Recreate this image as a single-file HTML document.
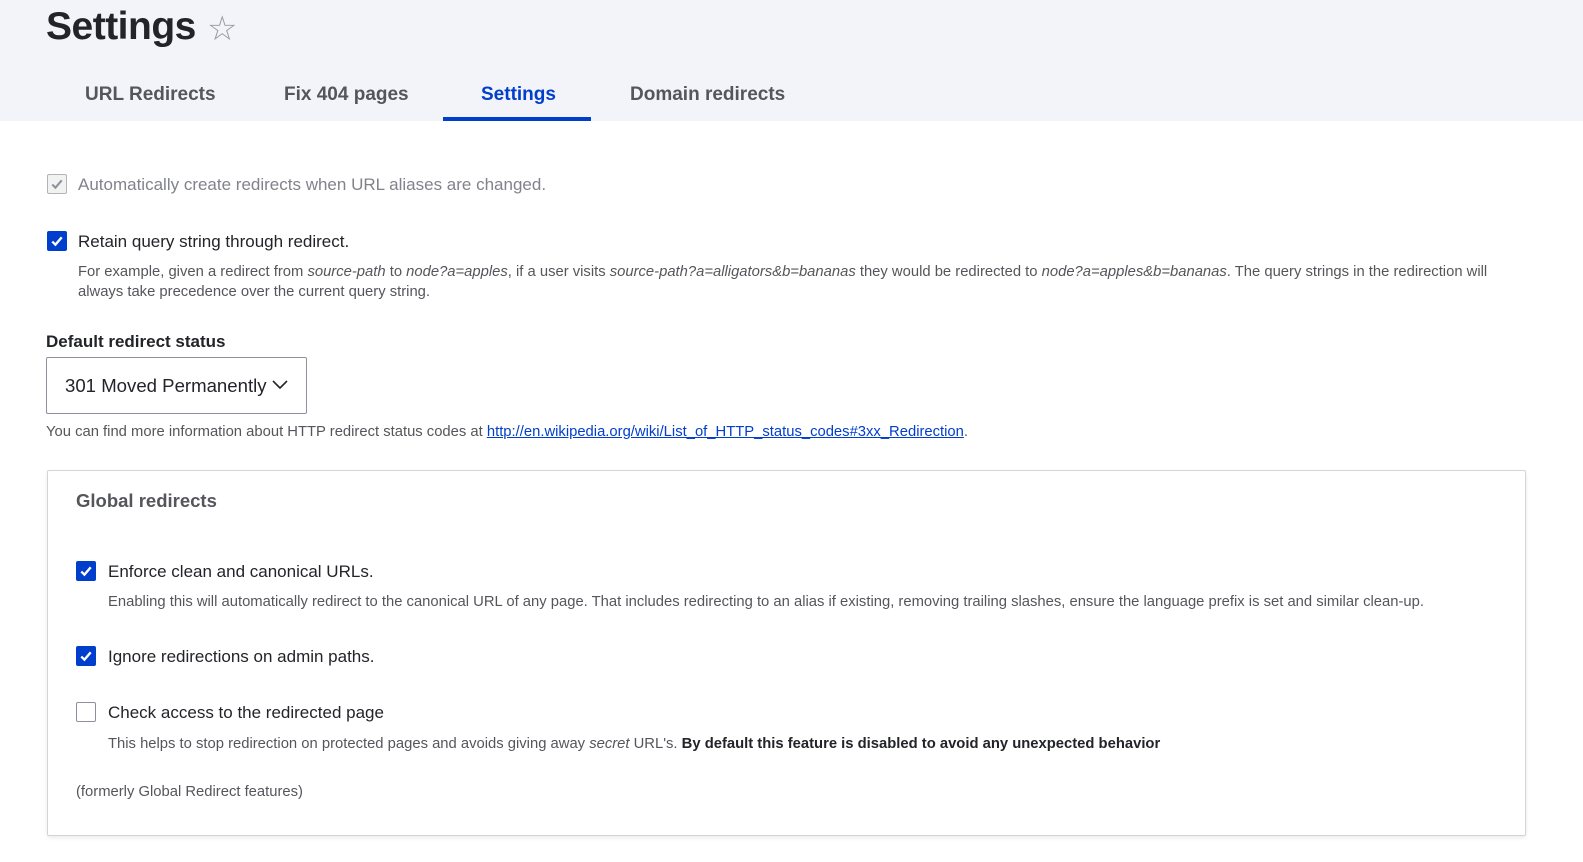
<!DOCTYPE html>
<html><head><meta charset="utf-8"><style>
body{margin:0;background:#fff;font-family:"Liberation Sans",sans-serif;color:#232429;width:1583px;height:862px;overflow:hidden;position:relative}
.hdr{position:absolute;left:0;top:0;width:1583px;height:121px;background:#f3f4f9}
h1{position:absolute;left:46px;top:5px;margin:0;font-size:39px;font-weight:bold;letter-spacing:-0.5px;color:#232429}
.star{position:absolute;left:207px;top:9px;font-size:34px;color:#999}
.tab{position:absolute;top:84px;font-size:19px;font-weight:bold;color:#55565b}
.act{color:#003ecc}
.bar{position:absolute;left:443px;top:117px;width:148px;height:4px;background:#003ecc}
.a{position:absolute;white-space:nowrap}
.cb{position:absolute;width:20px;height:20px;border-radius:2px;box-sizing:border-box}
.cb.on{background:#003ecc}
.cb.dis{background:#f2f2f3;border:1px solid #b3b3b8}
.cb.off{border:1px solid #8e929c;background:#fff}
.lbl{font-size:17px;color:#232429}
.desc{font-size:14.8px;color:#55565b;line-height:20px}
</style></head><body>
<div class="hdr"></div>
<h1>Settings</h1><div class="star">☆</div>
<div class="tab" style="left:85px">URL Redirects</div>
<div class="tab" style="left:284px">Fix 404 pages</div>
<div class="tab act" style="left:481px">Settings</div>
<div class="tab" style="left:630px">Domain redirects</div>
<div class="bar"></div>

<div class="cb dis" style="left:47px;top:174px"><svg width="20" height="20" viewBox="0 0 19 19" style="position:absolute;left:-1px;top:-1px"><path d="M5 10l3 3 6-7" stroke="#8e929c" stroke-width="2" fill="none"/></svg></div>
<div class="a lbl" style="left:78px;top:175px;color:#82828c">Automatically create redirects when URL aliases are changed.</div>

<div class="cb on" style="left:47px;top:231px"><svg width="20" height="20" viewBox="0 0 19 19"><path d="M5 10l3 3 6-7" stroke="#fff" stroke-width="2.2" fill="none"/></svg></div>
<div class="a lbl" style="left:78px;top:232px">Retain query string through redirect.</div>
<div class="a desc" style="left:78px;top:262px">For example, given a redirect from <i>source-path</i> to <i>node?a=apples</i>, if a user visits <i>source-path?a=alligators&amp;b=bananas</i> they would be redirected to <i>node?a=apples&amp;b=bananas</i>. The query strings in the redirection will<br>always take precedence over the current query string.</div>

<div class="a" style="left:46px;top:332px;font-size:17px;font-weight:bold">Default redirect status</div>
<div class="a" style="left:46px;top:357px;width:261px;height:57px;box-sizing:border-box;border:1px solid #8e929c;border-radius:2px"></div>
<div class="a" style="left:65px;top:375px;font-size:18.6px">301 Moved Permanently</div>
<svg class="a" style="left:271px;top:379px" width="18" height="12" viewBox="0 0 18 12"><path d="M2 2l7 7 7-7" stroke="#232429" stroke-width="1.6" fill="none"/></svg>
<div class="a desc" style="left:46px;top:422px">You can find more information about HTTP redirect status codes at <span style="color:#003ecc;text-decoration:underline">http://en.wikipedia.org/wiki/List_of_HTTP_status_codes#3xx_Redirection</span>.</div>

<div class="a" style="left:47px;top:470px;width:1479px;height:366px;box-sizing:border-box;border:1px solid #d3d4d9;border-radius:2px;box-shadow:0 2px 4px rgba(0,0,0,.08)"></div>
<div class="a" style="left:76px;top:490px;font-size:18.5px;font-weight:bold;color:#55565b">Global redirects</div>

<div class="cb on" style="left:76px;top:561px"><svg width="20" height="20" viewBox="0 0 19 19"><path d="M5 10l3 3 6-7" stroke="#fff" stroke-width="2.2" fill="none"/></svg></div>
<div class="a lbl" style="left:108px;top:562px">Enforce clean and canonical URLs.</div>
<div class="a desc" style="left:108px;top:592px">Enabling this will automatically redirect to the canonical URL of any page. That includes redirecting to an alias if existing, removing trailing slashes, ensure the language prefix is set and similar clean-up.</div>

<div class="cb on" style="left:76px;top:646px"><svg width="20" height="20" viewBox="0 0 19 19"><path d="M5 10l3 3 6-7" stroke="#fff" stroke-width="2.2" fill="none"/></svg></div>
<div class="a lbl" style="left:108px;top:647px">Ignore redirections on admin paths.</div>

<div class="cb off" style="left:76px;top:702px"></div>
<div class="a lbl" style="left:108px;top:703px">Check access to the redirected page</div>
<div class="a desc" style="left:108px;top:734px">This helps to stop redirection on protected pages and avoids giving away <i>secret</i> URL's. <b style="color:#232429">By default this feature is disabled to avoid any unexpected behavior</b></div>

<div class="a desc" style="left:76px;top:782px">(formerly Global Redirect features)</div>
</body></html>
